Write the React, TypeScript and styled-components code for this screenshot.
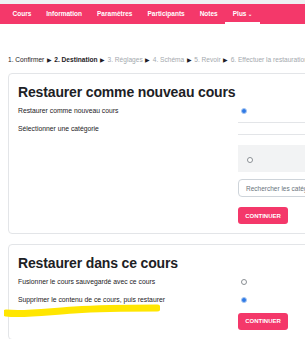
import React from "react";
import styled, { createGlobalStyle } from "styled-components";

const Global = createGlobalStyle`
  html, body { margin: 0; padding: 0; background: #fff; overflow: hidden; }
  body { font-family: "Liberation Sans", Arial, sans-serif; color: #1d2125; }
`;

const PINK = "#f4386a";

const Page = styled.div`
  position: relative;
  width: 305px;
  height: 339px;
  overflow: hidden;
`;

const TopStrip = styled.div`
  height: 4px;
  background: #eef0f2;
`;

const Nav = styled.nav`
  display: flex;
  height: 20px;
  background: ${PINK};
  padding-left: 5px;
`;

const NavItem = styled.div<{ $active?: boolean }>`
  display: flex;
  align-items: center;
  padding: 0 7.5px;
  font-size: 6.5px;
  font-weight: bold;
  color: #fff;
  white-space: nowrap;
  box-sizing: border-box;
  border-bottom: 2px solid ${(p) => (p.$active ? "#fff" : "transparent")};
  padding-top: 1px;
`;

const Chevron = styled.span`
  font-size: 5px;
  margin-left: 2px;
`;

const Main = styled.main`
  padding: 0 8px;
`;

const Steps = styled.div`
  margin-top: 32px;
  font-size: 6.6px;
  white-space: nowrap;
  color: #a4a9ae;
  line-height: 8px;
`;

const Step = styled.span<{ $state: "done" | "current" | "todo" }>`
  color: ${(p) => (p.$state === "todo" ? "#a4a9ae" : "#1d2125")};
  font-weight: ${(p) => (p.$state === "current" ? "bold" : "normal")};
`;

const Arrow = styled.span`
  color: #1d2125;
  font-size: 5.5px;
  margin: 0 2.5px;
`;

const Card = styled.section<{ $top: number }>`
  margin-top: ${(p) => p.$top}px;
  width: 420px;
  border: 1px solid #e3e5e8;
  border-radius: 4px;
  padding: 10px 9px 9px;
  box-sizing: border-box;
`;

const Heading = styled.h2`
  margin: 0 0 5px;
  font-family: "Liberation Sans", Arial, sans-serif;
  font-weight: bold;
  font-size: 14px;
  line-height: 17px;
  color: #1d2125;
  letter-spacing: -0.15px;
`;

const Row = styled.div<{ $h?: number }>`
  display: grid;
  grid-template-columns: 220px 1fr;
  align-items: start;
  min-height: ${(p) => p.$h ?? 18}px;
`;

const Label = styled.div`
  font-size: 6.8px;
  line-height: 8px;
  color: #1d2125;
  padding-top: 1px;
  white-space: nowrap;
`;

const Radio = styled.span<{ $checked?: boolean }>`
  display: block;
  width: 6px;
  height: 6px;
  margin: 2px 0 0 3px;
  border-radius: 50%;
  box-sizing: border-box;
  border: 1px solid ${(p) => (p.$checked ? "#a9c8f2" : "#8a8f94")};
  background: ${(p) => (p.$checked ? "#2f7ae5" : "#fff")};
`;

const Category = styled.div`
  display: flex;
  flex-direction: column;
`;

const EmptyRow = styled.div`
  margin-top: -2px;
  height: 11px;
  border-top: 1px solid #e3e5e8;
  border-bottom: 1px solid #e3e5e8;
`;

const Choice = styled.div`
  margin-top: 10px;
  height: 27px;
  background: #f2f3f4;
  display: flex;
  align-items: center;
  padding-left: 6px;
`;

const Search = styled.div`
  margin-top: 7px;
  height: 18px;
  border: 1px solid #ced4da;
  border-radius: 4px;
  box-sizing: border-box;
  display: flex;
  align-items: center;
  padding-left: 7px;
  font-size: 6.5px;
  color: #6a737b;
  white-space: nowrap;
`;

const Button = styled.button<{ $top: number }>`
  margin-top: ${(p) => p.$top}px;
  width: 50px;
  height: 17px;
  border: none;
  border-radius: 3px;
  background: ${PINK};
  color: #fff;
  font-family: "Liberation Sans", Arial, sans-serif;
  font-weight: bold;
  font-size: 6px;
  padding: 0;
  cursor: pointer;
`;

const Highlight = styled.svg`
  position: absolute;
  left: 4px;
  top: 304px;
  pointer-events: none;
`;

export default function App() {
  return (
    <Page>
      <Global />
      <TopStrip />
      <Nav>
        <NavItem>Cours</NavItem>
        <NavItem>Information</NavItem>
        <NavItem>Paramètres</NavItem>
        <NavItem>Participants</NavItem>
        <NavItem>Notes</NavItem>
        <NavItem $active>
          Plus<Chevron>⌄</Chevron>
        </NavItem>
      </Nav>
      <Main>
        <Steps>
          <Step $state="done">1. Confirmer</Step>
          <Arrow>▶</Arrow>
          <Step $state="current">2. Destination</Step>
          <Arrow>▶</Arrow>
          <Step $state="todo">3. Réglages</Step>
          <Arrow>▶</Arrow>
          <Step $state="todo">4. Schéma</Step>
          <Arrow>▶</Arrow>
          <Step $state="todo">5. Revoir</Step>
          <Arrow>▶</Arrow>
          <Step $state="todo">6. Effectuer la restauration</Step>
        </Steps>

        <Card $top={9}>
          <Heading>Restaurer comme nouveau cours</Heading>
          <Row>
            <Label>Restaurer comme nouveau cours</Label>
            <Radio $checked />
          </Row>
          <Row>
            <Label>Sélectionner une catégorie</Label>
            <Category>
              <EmptyRow />
              <Choice>
                <Radio />
              </Choice>
              <Search>Rechercher les catégories</Search>
              <div>
                <Button $top={10}>CONTINUER</Button>
              </div>
            </Category>
          </Row>
        </Card>

        <Card $top={10}>
          <Heading>Restaurer dans ce cours</Heading>
          <Row>
            <Label>Fusionner le cours sauvegardé avec ce cours</Label>
            <Radio />
          </Row>
          <Row $h={14}>
            <Label>Supprimer le contenu de ce cours, puis restaurer</Label>
            <Radio $checked />
          </Row>
          <Row>
            <div />
            <div>
              <Button $top={0}>CONTINUER</Button>
            </div>
          </Row>
        </Card>
      </Main>
      <Highlight width="156" height="14" viewBox="0 0 156 14">
        <path
          d="M2 9 C 20 11, 40 8, 70 6 S 130 4, 153 4"
          stroke="#ffe600"
          strokeWidth="7"
          strokeLinecap="round"
          fill="none"
        />
      </Highlight>
    </Page>
  );
}
